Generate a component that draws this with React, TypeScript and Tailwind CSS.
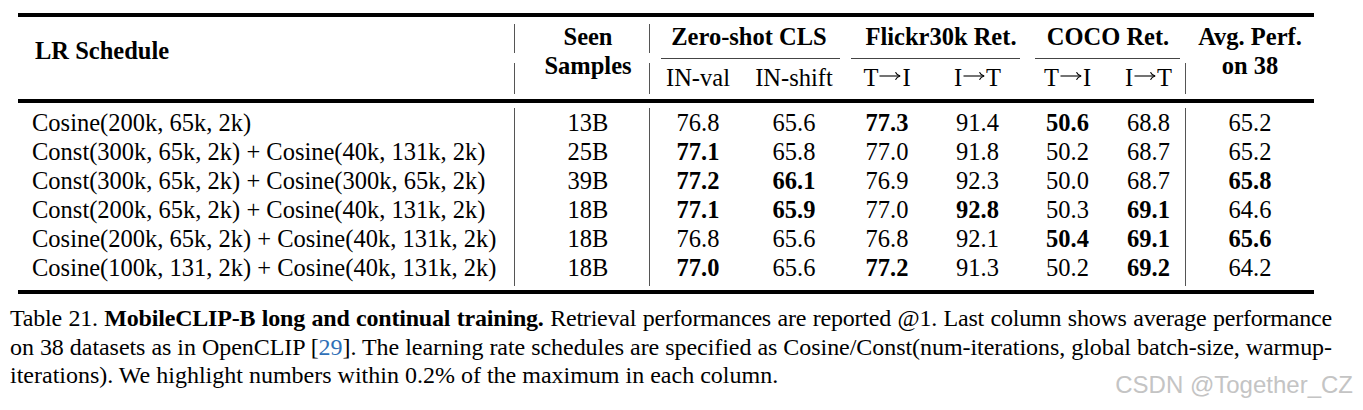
import React from "react";

const cols =
  "grid-cols-[496px_1px_134px_1px_96px_96px_90px_91px_89px_73px_1px_128px]";

// "*" prefix marks a bold (within 0.2% of max) value
const rows: { lr: string; seen: string; vals: string[] }[] = [
  { lr: "Cosine(200k, 65k, 2k)", seen: "13B", vals: ["76.8", "65.6", "*77.3", "91.4", "*50.6", "68.8", "65.2"] },
  { lr: "Const(300k, 65k, 2k) + Cosine(40k, 131k, 2k)", seen: "25B", vals: ["*77.1", "65.8", "77.0", "91.8", "50.2", "68.7", "65.2"] },
  { lr: "Const(300k, 65k, 2k) + Cosine(300k, 65k, 2k)", seen: "39B", vals: ["*77.2", "*66.1", "76.9", "92.3", "50.0", "68.7", "*65.8"] },
  { lr: "Const(200k, 65k, 2k) + Cosine(40k, 131k, 2k)", seen: "18B", vals: ["*77.1", "*65.9", "77.0", "*92.8", "50.3", "*69.1", "64.6"] },
  { lr: "Cosine(200k, 65k, 2k) + Cosine(40k, 131k, 2k)", seen: "18B", vals: ["76.8", "65.6", "76.8", "92.1", "*50.4", "*69.1", "*65.6"] },
  { lr: "Cosine(100k, 131, 2k) + Cosine(40k, 131k, 2k)", seen: "18B", vals: ["*77.0", "65.6", "*77.2", "91.3", "50.2", "*69.2", "64.2"] },
];

function Val({ v }: { v: string }) {
  const bold = v.startsWith("*");
  return (
    <div className={`text-center ${bold ? "font-bold" : ""}`}>
      {bold ? v.slice(1) : v}
    </div>
  );
}

// seta estilo \rightarrow do LaTeX
function Arrow() {
  return (
    <svg
      width="22"
      height="10"
      viewBox="0 0 22 10"
      className="inline-block mx-[1px] align-[5px]"
      fill="none"
      stroke="black"
      strokeWidth="1.1"
    >
      <path d="M0.5 5H21" />
      <path d="M16.5 1.2C17.3 3 18.8 4.4 21.2 5C18.8 5.6 17.3 7 16.5 8.8" />
    </svg>
  );
}

function Dir({ from, to }: { from: string; to: string }) {
  return (
    <div className="text-center leading-[29px] whitespace-nowrap">
      {from}
      <Arrow />
      {to}
    </div>
  );
}

export default function App() {
  return (
    <div className="relative w-[1363px] h-[410px] overflow-hidden bg-white pt-[13px] text-black font-['Liberation_Serif','Times_New_Roman',serif]">
      {/* Tabela */}
      <div className="ml-[18px] w-[1296px] text-[24.5px]">
        <div className="h-[4px] bg-black" />

        {/* Cabeçalho */}
        <div className={`grid ${cols} grid-rows-[29px_10px_31px] mt-[7px]`}>
          <div className="col-start-1 row-start-1 row-end-4 pl-[17px] pt-[12px] font-bold leading-[29px]">
            LR Schedule
          </div>
          <div className="col-start-2 row-start-1 bg-[#555]" />
          <div className="col-start-2 row-start-3 bg-[#555]" />
          <div className="col-start-3 row-start-1 row-end-4 pl-[12px] -mt-[2px] text-center font-bold leading-[29px]">
            Seen
            <br />
            Samples
          </div>
          <div className="col-start-4 row-start-1 bg-[#555]" />
          <div className="col-start-4 row-start-3 bg-[#555]" />

          <div className="col-start-5 col-span-2 row-start-1 pl-[6px] text-center font-bold leading-[26px]">
            Zero-shot CLS
          </div>
          <div className="col-start-7 col-span-2 row-start-1 pl-[17px] text-center font-bold leading-[26px]">
            Flickr30k Ret.
          </div>
          <div className="col-start-9 col-span-2 row-start-1 pl-[8px] text-center font-bold leading-[26px]">
            COCO Ret.
          </div>

          <div className="col-start-5 col-span-2 row-start-2 flex items-center">
            <div className="h-px flex-1 ml-[11px] mr-[2px] bg-[#444]" />
          </div>
          <div className="col-start-7 col-span-2 row-start-2 flex items-center">
            <div className="h-px flex-1 ml-[9px] mr-[3px] bg-[#444]" />
          </div>
          <div className="col-start-9 col-span-2 row-start-2 flex items-center">
            <div className="h-px flex-1 ml-[12px] mr-[5px] bg-[#444]" />
          </div>

          <div className="col-start-5 row-start-3 text-center leading-[29px]">IN-val</div>
          <div className="col-start-6 row-start-3 text-center leading-[29px]">IN-shift</div>
          <div className="col-start-7 row-start-3">
            <Dir from="T" to="I" />
          </div>
          <div className="col-start-8 row-start-3">
            <Dir from="I" to="T" />
          </div>
          <div className="col-start-9 row-start-3">
            <Dir from="T" to="I" />
          </div>
          <div className="col-start-10 row-start-3">
            <Dir from="I" to="T" />
          </div>
          <div className="col-start-11 row-start-3 bg-[#555]" />

          <div className="col-start-12 row-start-1 row-end-4 -mt-[2px] text-center font-bold leading-[29px]">
            Avg. Perf.
            <br />
            on 38
          </div>
        </div>

        <div className="h-[4px] mt-[5px] bg-black" />

        {/* Linhas de dados */}
        <div className={`grid ${cols} grid-rows-[repeat(6,29px)_4px] mt-[5px] leading-[29px]`}>
          <div className="col-start-2 row-start-1 row-end-8 bg-[#555]" />
          <div className="col-start-4 row-start-1 row-end-8 bg-[#555]" />
          <div className="col-start-11 row-start-1 row-end-8 bg-[#555]" />
          {rows.map((r, i) => (
            <React.Fragment key={i}>
              <div className="pl-[14px] whitespace-nowrap">{r.lr}</div>
              <div className="pl-[12px] text-center">{r.seen}</div>
              {r.vals.map((v, j) => (
                <Val key={j} v={v} />
              ))}
            </React.Fragment>
          ))}
        </div>

        <div className="h-[4px] mt-[4px] bg-black" />
      </div>

      {/* Legenda */}
      <div className="ml-[10px] mt-[10px] w-[1322px] text-[24px] leading-[28.5px]">
        <div className="whitespace-nowrap tracking-[-0.2px] text-justify [text-align-last:justify]">
          Table 21. <b>MobileCLIP-B long and continual training.</b> Retrieval
          performances are reported @1. Last column shows average performance
        </div>
        <div className="whitespace-nowrap tracking-[-0.05px] text-justify [text-align-last:justify]">
          on 38 datasets as in OpenCLIP [<span className="text-[#2f6fb7]">29</span>]. The learning rate
          schedules are specified as Cosine/Const(num-iterations, global batch-size, warmup-
        </div>
        <div>
          iterations). We highlight numbers within 0.2% of the maximum in each column.
        </div>
      </div>

      {/* Marca d'água */}
      <div className="absolute right-[10px] top-[373px] text-[24px] leading-[24px] text-[#c4c4c4] font-['Liberation_Sans',Arial,sans-serif]">
        CSDN @Together_CZ
      </div>
    </div>
  );
}
